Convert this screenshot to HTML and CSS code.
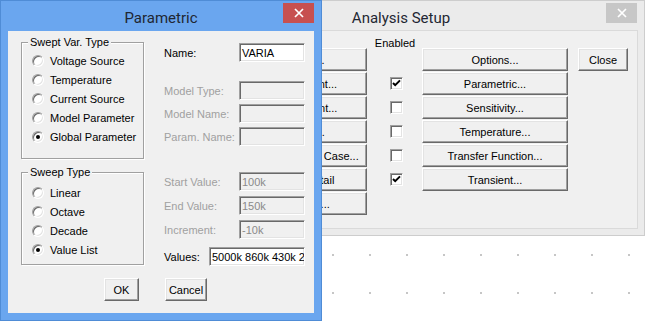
FILE: index.html
```html
<!DOCTYPE html>
<html lang="en">
<head>
    <meta charset="UTF-8">
    <meta name="viewport" content="width=device-width, initial-scale=1.0">
    <title>Parametric - Analysis Setup</title>
    <link rel="stylesheet" href="styles.css">
</head>
<body>
    <div class="desktop">

        <!-- Analysis Setup (inactive, behind) -->
        <div class="window window-inactive setup">
            <div class="titlebar">
                <span class="title">Analysis Setup</span>
                <span class="close-btn close-inactive">
                    <svg width="10" height="10" viewBox="0 0 10 10"><path d="M1 1L9 9M9 1L1 9" stroke="#fff" stroke-width="1.7"/></svg>
                </span>
            </div>
            <div class="client setup-client">
                <div class="col col-left">
                    <div class="btn">AC Sweep...</div>
                    <div class="btn">Load Bias Point...</div>
                    <div class="btn">Save Bias Point...</div>
                    <div class="btn">DC Sweep...</div>
                    <div class="btn">Monte Carlo/Worst Case...</div>
                    <div class="btn">Bias Point Detail</div>
                    <div class="btn">Digital Setup...</div>
                </div>
                <div class="col col-check">
                    <div class="slot enabled"><span>Enabled</span></div>
                    <div class="slot"><span class="checkbox checked"><svg width="9" height="9" viewBox="0 0 9 9"><path d="M1 4L3.2 6.2L8 1.4" fill="none" stroke="#000" stroke-width="2"/></svg></span></div>
                    <div class="slot"><span class="checkbox"></span></div>
                    <div class="slot"><span class="checkbox"></span></div>
                    <div class="slot"><span class="checkbox"></span></div>
                    <div class="slot"><span class="checkbox checked"><svg width="9" height="9" viewBox="0 0 9 9"><path d="M1 4L3.2 6.2L8 1.4" fill="none" stroke="#000" stroke-width="2"/></svg></span></div>
                </div>
                <div class="col col-mid">
                    <div class="btn">Options...</div>
                    <div class="btn">Parametric...</div>
                    <div class="btn">Sensitivity...</div>
                    <div class="btn">Temperature...</div>
                    <div class="btn">Transfer Function...</div>
                    <div class="btn">Transient...</div>
                </div>
                <div class="col col-close">
                    <div class="btn">Close</div>
                </div>
            </div>
        </div>

        <!-- Parametric (active, front) -->
        <div class="window window-active param">
            <div class="titlebar">
                <span class="title">Parametric</span>
                <span class="close-btn close-active">
                    <svg width="10" height="10" viewBox="0 0 10 10"><path d="M1 1L9 9M9 1L1 9" stroke="#fff" stroke-width="1.7"/></svg>
                </span>
            </div>
            <div class="client param-client">
                <div class="param-body">
                    <div class="param-left">
                        <div class="group group-var">
                            <div class="group-title">Swept Var. Type</div>
                            <div class="radio-list">
                                <div class="radio-row"><span class="radio"></span>Voltage Source</div>
                                <div class="radio-row"><span class="radio"></span>Temperature</div>
                                <div class="radio-row"><span class="radio"></span>Current Source</div>
                                <div class="radio-row"><span class="radio"></span>Model Parameter</div>
                                <div class="radio-row"><span class="radio on"></span>Global Parameter</div>
                            </div>
                        </div>
                        <div class="group group-sweep">
                            <div class="group-title">Sweep Type</div>
                            <div class="radio-list">
                                <div class="radio-row"><span class="radio"></span>Linear</div>
                                <div class="radio-row"><span class="radio"></span>Octave</div>
                                <div class="radio-row"><span class="radio"></span>Decade</div>
                                <div class="radio-row"><span class="radio on"></span>Value List</div>
                            </div>
                        </div>
                    </div>

                    <div class="param-right">
                        <div class="field field-name">
                            <span class="field-label">Name:</span>
                            <span class="edit">VARIA</span>
                        </div>
                        <div class="field-group model-fields">
                            <div class="field">
                                <span class="field-label disabled">Model Type:</span>
                                <span class="edit edit-disabled"></span>
                            </div>
                            <div class="field">
                                <span class="field-label disabled">Model Name:</span>
                                <span class="edit edit-disabled"></span>
                            </div>
                            <div class="field">
                                <span class="field-label disabled">Param. Name:</span>
                                <span class="edit edit-disabled"></span>
                            </div>
                        </div>
                        <div class="field-group sweep-fields">
                            <div class="field">
                                <span class="field-label disabled">Start Value:</span>
                                <span class="edit edit-disabled">100k</span>
                            </div>
                            <div class="field">
                                <span class="field-label disabled">End Value:</span>
                                <span class="edit edit-disabled">150k</span>
                            </div>
                            <div class="field">
                                <span class="field-label disabled">Increment:</span>
                                <span class="edit edit-disabled">-10k</span>
                            </div>
                        </div>
                        <div class="field field-values">
                            <span class="field-label values-label">Values:</span>
                            <span class="edit edit-wide">5000k 860k 430k 220k 100k</span>
                        </div>
                    </div>
                </div>

                <div class="dialog-buttons">
                    <div class="btn btn-ok">OK</div>
                    <div class="btn btn-cancel">Cancel</div>
                </div>
            </div>
        </div>

    </div>
</body>
</html>
```

FILE: styles.css
```css
* {
    box-sizing: border-box;
}

body {
    margin: 0;
    font-family: "Liberation Sans", Arial, sans-serif;
    font-size: 11px;
    color: #000;
    background: #fff;
}

.desktop {
    position: relative;
    width: 649px;
    height: 323px;
    overflow: hidden;
    background-color: #fff;
    background-image: radial-gradient(circle, #8c8c8c 0, #8c8c8c 0.6px, transparent 1.1px);
    background-size: 37px 38px;
    background-position: 314.5px 236px;
}

/* windows */

.window {
    position: absolute;
    display: flex;
    flex-direction: column;
    padding: 0 7px 7px;
}

.window-active {
    background: #6aa6ef;
    border: 1px solid #4f8cd6;
}

.window-inactive {
    background: #ebebeb;
    border: 1px solid #cdcdcd;
}

.param {
    left: 0;
    top: 0;
    width: 322px;
    height: 321px;
}

.setup {
    left: 157px;
    top: 0;
    width: 488px;
    height: 236px;
}

.titlebar {
    height: 30px;
    display: grid;
    grid-template-columns: 1fr auto 1fr;
    align-items: start;
}

.title {
    grid-column: 2;
    font-family: Roboto, "Liberation Sans", sans-serif;
    font-size: 15px;
    line-height: 30px;
    padding-top: 2px;
    color: #1f2733;
    white-space: nowrap;
}

.close-btn {
    grid-column: 3;
    justify-self: end;
    width: 31px;
    height: 20px;
    margin-top: 2px;
    display: flex;
    align-items: center;
    justify-content: center;
}

.close-active {
    background: #c75050;
}

.close-inactive {
    background: #c7c7c7;
}

.client {
    flex: 1;
    background: #f0f0f0;
}

.window-inactive .client {
    box-shadow: 0 0 0 1px #dadada;
}

/* classic 3d controls */

.btn {
    height: 23px;
    display: flex;
    align-items: center;
    justify-content: center;
    white-space: nowrap;
    overflow: hidden;
    background: #f0f0f0;
    border: 1px solid;
    border-color: #fff #696969 #696969 #fff;
    box-shadow: inset -1px -1px 0 #a0a0a0, inset 1px 1px 0 #e3e3e3;
}

.edit {
    height: 19px;
    display: flex;
    align-items: center;
    padding: 0 2px;
    white-space: nowrap;
    overflow: hidden;
    background: #fff;
    border: 1px solid;
    border-color: #a0a0a0 #fff #fff #a0a0a0;
    box-shadow: inset 1px 1px 0 #696969, inset -1px -1px 0 #e3e3e3;
}

.edit-disabled {
    background: #f0f0f0;
    color: #8a8a8a;
}

.checkbox {
    width: 13px;
    height: 13px;
    display: flex;
    align-items: center;
    justify-content: center;
    background: #fff;
    border: 1px solid;
    border-color: #a0a0a0 #fff #fff #a0a0a0;
    box-shadow: inset 1px 1px 0 #696969, inset -1px -1px 0 #e3e3e3;
}

.radio {
    position: relative;
    width: 12px;
    height: 12px;
    flex: none;
    margin-right: 6px;
    border-radius: 50%;
    background: #fff;
    border: 1px solid;
    border-color: #a0a0a0 #fff #fff #a0a0a0;
    box-shadow: inset 1px 1px 0 #696969, inset -1px -1px 0 #e3e3e3;
}

.radio.on::after {
    content: "";
    position: absolute;
    left: 3px;
    top: 3px;
    width: 4px;
    height: 4px;
    border-radius: 50%;
    background: #000;
}

/* analysis setup */

.setup-client {
    display: flex;
    align-items: flex-start;
    padding: 17px 0 0 62px;
}

.col {
    display: flex;
    flex-direction: column;
    gap: 1px;
}

.col-left {
    width: 140px;
}

.col-left .btn {
    padding-right: 6px;
}

.col-check {
    width: 13px;
    margin-left: 23px;
}

.col-mid {
    width: 146px;
    margin-left: 19px;
}

.col-close {
    width: 50px;
    margin-left: 10px;
}

.slot {
    height: 23px;
    display: flex;
    align-items: center;
    justify-content: center;
}

.enabled {
    align-items: flex-start;
}

.enabled span {
    margin-top: -11px;
    margin-right: 3px;
    line-height: 13px;
    white-space: nowrap;
}

/* parametric */

.param-client {
    display: flex;
    flex-direction: column;
    padding: 11px 9px 0 13px;
}

.param-body {
    display: flex;
    gap: 20px;
}

.param-left {
    width: 123px;
    display: flex;
    flex-direction: column;
    gap: 13px;
}

.group {
    border: 1px solid #a0a0a0;
    box-shadow: inset 1px 1px 0 #fff, 1px 1px 0 #fff;
}

.group-var {
    height: 117px;
}

.group-sweep {
    height: 93px;
}

.group-title {
    width: fit-content;
    margin: -7px 0 0 6px;
    padding: 0 2px;
    line-height: 13px;
    background: #f0f0f0;
}

.radio-list {
    padding: 2px 0 0 10px;
}

.group-sweep .radio-list {
    padding-top: 4px;
}

.radio-row {
    height: 19px;
    display: flex;
    align-items: center;
    white-space: nowrap;
}

.param-right {
    width: 141px;
}

.field {
    height: 19px;
    display: flex;
    align-items: center;
}

.field-label {
    width: 75px;
    flex: none;
    white-space: nowrap;
}

.field-label.disabled {
    color: #a0a0a0;
}

.field .edit {
    flex: 1;
}

.field-name {
    margin-top: 1px;
}

.field-group {
    display: flex;
    flex-direction: column;
}

.model-fields {
    margin-top: 19px;
    gap: 4px;
}

.sweep-fields {
    margin-top: 26px;
    gap: 5px;
}

.field-values {
    margin-top: 8px;
}

.values-label {
    width: 45px;
}

.dialog-buttons {
    display: flex;
    gap: 26px;
    margin-top: 12px;
    padding-left: 83px;
}

.btn-ok {
    width: 35px;
}

.btn-cancel {
    width: 42px;
}
```
